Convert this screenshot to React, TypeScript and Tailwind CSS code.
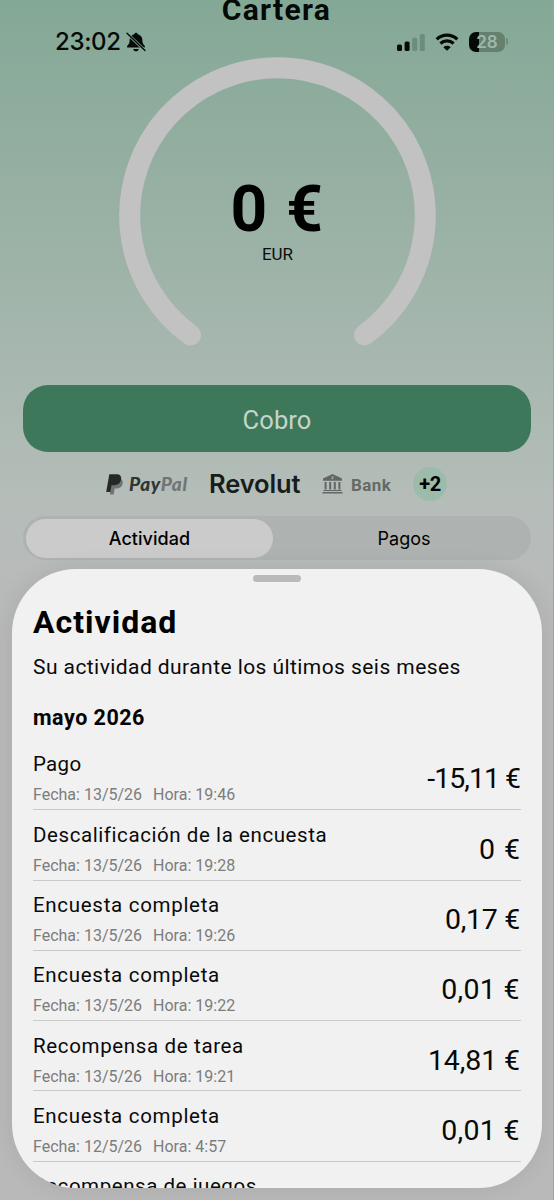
import React from "react";

type Entry = { title: string; titleClass: string; date: string; time: string; amount: string; amountClass: string };

const entries: Entry[] = [
  { title: "Pago", titleClass: "tracking-[0.3px]", date: "13/5/26", time: "19:46", amount: "-15,11 €", amountClass: "tracking-[-1px]" },
  { title: "Descalificación de la encuesta", titleClass: "tracking-[0.58px]", date: "13/5/26", time: "19:28", amount: "0 €", amountClass: "tracking-[1px] -mr-px" },
  { title: "Encuesta completa", titleClass: "tracking-[0.7px]", date: "13/5/26", time: "19:26", amount: "0,17 €", amountClass: "tracking-[-0.3px]" },
  { title: "Encuesta completa", titleClass: "tracking-[0.7px]", date: "13/5/26", time: "19:22", amount: "0,01 €", amountClass: "tracking-[0.35px]" },
  { title: "Recompensa de tarea", titleClass: "tracking-[0.65px]", date: "13/5/26", time: "19:21", amount: "14,81 €", amountClass: "tracking-[-0.1px]" },
  { title: "Encuesta completa", titleClass: "tracking-[0.7px]", date: "12/5/26", time: "4:57", amount: "0,01 €", amountClass: "tracking-[0.35px]" },
  { title: "Recompensa de juegos", titleClass: "tracking-[0.55px]", date: "12/5/26", time: "4:50", amount: "", amountClass: "" },
];

function BellSlash() {
  return (
    <svg className="h-5 w-5" viewBox="0 0 20 20">
      <path d="M10 .8c.9 0 1.600.6 1.700 1.400 2.800.6 4.600 2.700 4.600 5.300 0 3.600.8 4.700 2.300 6.200.8.8.4 1.800-.7 1.800H2.100c-1.100 0-1.500-1-.7-1.800C2.900 12.200 3.700 11.100 3.700 7.500c0-2.600 1.800-4.700 4.600-5.300C8.400 1.400 9.100.8 10 .8Z" fill="#050a07" />
      <path d="M7.200 16.900h5.600c-.3 1.500-1.400 2.400-2.800 2.400s-2.500-.9-2.800-2.400Z" fill="#050a07" />
      <path d="M.8 1.300 19 18.500" stroke="#89a999" strokeWidth="3" />
      <path d="M1 1.300 19 18.500" stroke="#050a07" strokeWidth="1.400" strokeLinecap="round" />
    </svg>
  );
}

function StatusBar() {
  return (
    <div className="absolute inset-x-0 top-[30px] flex h-6 items-center justify-between pr-[45px] pl-[55px]">
      <div className="flex items-center gap-[5px]">
        <span className="font-[Inter] text-[24px] leading-6 font-medium tracking-[-0.35px] text-[#050a07]">23:02</span>
        <BellSlash />
      </div>
      <div className="flex items-center pb-px">
        <svg className="h-[18px] w-[28px]" viewBox="0 0 28 18">
          <rect x="0" y="11.500" width="5" height="6.500" rx="1.500" fill="#050a07" />
          <rect x="7.600" y="8.500" width="5" height="9.500" rx="1.500" fill="#050a07" />
          <rect x="15.200" y="4.700" width="5" height="13.300" rx="1.500" fill="#6c8d7d" />
          <rect x="22.800" y="1" width="5" height="17" rx="1.500" fill="#6c8d7d" />
        </svg>
        <svg className="ml-[10px] h-[18px] w-6" viewBox="0 0 24 18" fill="none" stroke="#050a07">
          <path d="M1.700 6.400C7.500.8 16.500.8 22.300 6.400" strokeWidth="3.200" />
          <path d="M5.400 10.500c3.800-3.500 9.400-3.500 13.200 0" strokeWidth="3.100" />
          <path d="M12 17.800 8.300 14.200c2.200-1.900 5.200-1.900 7.400 0Z" fill="#050a07" stroke="none" />
        </svg>
        <div className="ml-[10px] flex h-5 w-9 items-center justify-center rounded-[7px] bg-linear-to-r from-[#050a07] from-28% to-[#66806f] to-28%">
          <span className="font-[Inter] text-[17px] leading-5 font-semibold text-[#9fb8aa]">28</span>
        </div>
        <div className="ml-px h-[7px] w-[2px] rounded-r-full bg-[#6c8d7d]" />
      </div>
    </div>
  );
}

function Gauge() {
  return (
    <div className="mx-auto mt-[32px] grid h-[297px] w-[318px] place-items-start">
      <svg className="col-start-1 row-start-1 h-[297px] w-[318px]" viewBox="0 0 318 297" fill="none">
        <path d="M72.500 278A147.800 147.800 0 1 1 246.500 278" stroke="#c3c2c3" strokeWidth="21" strokeLinecap="round" />
      </svg>
      <div className="col-start-1 row-start-1 flex w-full flex-col items-center pt-[117px] pl-[2px]">
        <div className="text-[64px] leading-[72px] font-bold tracking-[1.500px] text-black">0 €</div>
        <div className="-mt-1 text-[17px] leading-6 text-[#0b100d]">EUR</div>
      </div>
    </div>
  );
}

function Methods() {
  return (
    <div className="mt-[14px] flex h-9 items-center pl-[106px]">
      <svg className="h-[21px] w-[18px]" viewBox="0 0 18 21">
        <path d="M6.500 4.500h7.200c2.500.8 3.500 2.800 2.900 5.200-.7 3.300-3 4.700-6.100 4.700H8.700L7.600 20.500H3.800Z" fill="#707574" />
        <path d="M3.300.3h7.200c3.500 0 5.300 2 4.600 5.300-.8 3.800-3.300 5.600-7 5.600H5.600L4.400 18H.2Z" fill="#252a28" />
      </svg>
      <div className="ml-[5px] w-[62px] font-[Lato] text-[19px] leading-6 font-black tracking-[0.6px] whitespace-nowrap text-[#303533] italic">
        Pay<span className="text-[#717675]">Pal</span>
      </div>
      <div className="ml-[18px] w-[92px] font-[Inter] text-[25.500px] leading-8 font-semibold tracking-[-0.1px] text-[#171d1a]">Revolut</div>
      <svg className="ml-[21px] h-5 w-[21px]" viewBox="0 0 21 20" fill="#626664">
        <path d="M10.500 0 20 4.600V6.700H1V4.600Z" />
        <path d="M2.600 8h2v7.500h-2zM7.200 8h2v7.500h-2zM11.800 8h2v7.500h-2zM16.400 8h2v7.500h-2zM1.500 16h18v1h-18zM.5 18h20v1.500H.5z" />
        <path d="M11.600 2.700c-1.700-.6-2.300.6-1.200.9 1.600.3 1 1.600-1.100 1" fill="none" stroke="#b3bbb7" strokeWidth=".8" />
      </svg>
      <div className="ml-[8px] w-[41px] pt-px text-[17px] leading-6 font-bold tracking-[0.4px] text-[#656a68]">Bank</div>
      <div className="ml-[21px] flex h-[34px] w-[34px] items-center justify-center rounded-full bg-[#9dbbab] text-[20px] leading-6 font-bold tracking-[-0.5px] text-black">+2</div>
    </div>
  );
}

function Tabs() {
  return (
    <div className="mx-[23px] mt-[14px] flex h-11 w-[508px] shrink-0 rounded-full bg-[#aeb2b0] px-[3px] py-[2.500px] font-[Inter] text-[18px] leading-6 text-black">
      <div className="flex w-[247px] items-center justify-center rounded-full bg-[#cbcbcb] pt-px font-medium tracking-[0.050px]">Actividad</div>
      <div className="flex flex-1 items-center justify-center pt-px pl-[7px]">Pagos</div>
    </div>
  );
}

function Row({ entry }: { entry: Entry }) {
  return (
    <div className="flex h-[70.300px] shrink-0 justify-between border-b-[1.500px] border-[#cacaca]">
      <div className="pt-[10.400px]">
        <div className={"text-[20.500px] leading-7 whitespace-nowrap text-[#0a0a0a] " + entry.titleClass}>{entry.title}</div>
        <div className="mt-[6px] flex gap-[11px] text-[16px] leading-[22px] text-[#7c7c7c]">
          <span>Fecha: {entry.date}</span>
          <span>Hora: {entry.time}</span>
        </div>
      </div>
      <div className={"pt-[21.400px] pr-px text-[28.500px] leading-9 whitespace-nowrap text-[#080808] " + entry.amountClass}>{entry.amount}</div>
    </div>
  );
}

function Sheet() {
  return (
    <div className="absolute top-[569px] left-[12px] flex h-[619px] w-[530px] flex-col overflow-hidden rounded-[64px] bg-[#f1f1f1] px-[21px] shadow-[0_0_24px_rgba(0,0,0,0.08)]">
      <div className="mx-auto mt-[6px] h-[7px] w-12 shrink-0 rounded-full bg-[#bababa]" />
      <h2 className="mt-[22px] text-[32px] leading-9 font-bold tracking-[1px] text-black">Actividad</h2>
      <p className="mt-[13px] text-[21px] leading-7 tracking-[0.43px] whitespace-nowrap text-[#0a0a0a]">Su actividad durante los últimos seis meses</p>
      <h3 className="mt-[23px] text-[21.500px] leading-7 font-bold tracking-[0.5px] text-[#050505]">mayo 2026</h3>
      <div className="mt-[8px] flex flex-col">
        {entries.map((entry, i) => (
          <Row key={i} entry={entry} />
        ))}
      </div>
    </div>
  );
}

export default function App() {
  return (
    <div className="relative h-[1200px] w-[554px] overflow-hidden border-r border-[#9da3a0] bg-linear-to-b from-[#84a896] via-[#b5bdb9] via-42% to-[#b9b9b9] to-52% font-[Roboto,sans-serif]">
      <h1 className="mt-[-7px] h-8 text-center text-[30px] leading-[34px] font-bold tracking-[1.300px] text-[#050a07]">Cartera</h1>
      <StatusBar />
      <Gauge />
      <button className="mx-[23px] mt-[31px] flex h-[67px] w-[508px] items-center justify-center rounded-[25px] bg-[#3d785b] pt-[3px] text-[25.500px] leading-8 tracking-[0.1px] text-[#c5d5cc]">
        Cobro
      </button>
      <Methods />
      <Tabs />
      <Sheet />
    </div>
  );
}
